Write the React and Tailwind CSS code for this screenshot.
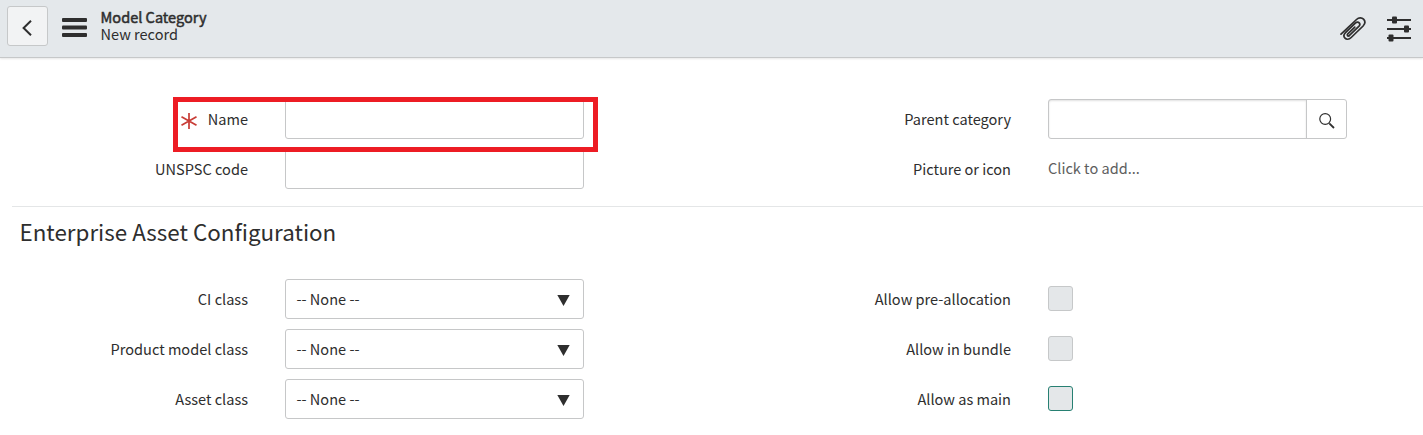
import React from "react";

function Row({ label, required, children }) {
  return (
    <div className="flex h-10">
      <div className="mr-[37px] flex w-[236px] items-center justify-end gap-[11px] whitespace-nowrap pb-px">
        {required && (
          <svg className="mt-[4px] h-4 w-4" viewBox="0 0 16 16" fill="none" stroke="#c83c36" strokeWidth="1.7">
            <path d="M8 0v16M0.5 3.7l15 8.6M0.5 12.3l15-8.6" />
          </svg>
        )}
        <span>{label}</span>
      </div>
      <div className="w-[299px]">{children}</div>
    </div>
  );
}

function TextField() {
  return <div className="h-10 rounded-[3px] border border-[#c6c7c8] bg-white" />;
}

function SelectField() {
  return (
    <div className="flex h-10 items-center justify-between rounded-[3px] border border-[#c6c7c8] bg-white pl-[10.5px] pr-[13px]">
      <span className="pb-px">-- None --</span>
      <svg className="mt-[2px] h-[11px] w-[13px]" viewBox="0 0 13 11" fill="#2e2e2e">
        <path d="M0.3 0h12.4L6.5 11z" />
      </svg>
    </div>
  );
}

function CheckField({ active }) {
  return (
    <div
      className={
        active
          ? "mt-[7px] h-[25px] w-[25px] rounded-[3px] border border-[#278072] bg-[#e4e7e9]"
          : "mt-[7px] h-[25px] w-[25px] rounded-[3px] border border-[#c6c8c9] bg-[#e4e7e9]"
      }
    />
  );
}

function Columns({ left, right }) {
  return (
    <div className="flex gap-[191px] pl-3">
      <div className="flex flex-col gap-[10px]">{left}</div>
      <div className="flex flex-col gap-[10px]">{right}</div>
    </div>
  );
}

export default function App() {
  return (
    <div className="h-[435px] w-[1423px] overflow-hidden bg-white font-['Noto_Sans_CJK_SC','Noto_Sans',sans-serif] text-[14.55px] leading-5 text-[#2e2e2e]">
      <header className="flex h-[58px] border-b border-[#c6c8c9] bg-[#e4e8eb] pl-[7px] shadow-[0_1px_2px_rgba(0,0,0,0.1)]">
        <div className="mt-[6px] flex h-10 w-[41px] items-center justify-center rounded-[3px] border border-[#c6c8c9] bg-[#f2f3f4]">
          <svg className="mr-[1px] mt-[3px] h-4 w-[10px]" viewBox="0 0 10 16" fill="none" stroke="#2e2e2e" strokeWidth="2">
            <path d="M9 0.8L1.6 8L9 15.2" />
          </svg>
        </div>
        <svg className="ml-[14px] mt-[18px] h-[19px] w-[25px]" viewBox="0 0 25 19" fill="#2e2e2e">
          <rect width="25" height="4" rx="1" />
          <rect y="7.5" width="25" height="4" rx="1" />
          <rect y="15" width="25" height="4" rx="1" />
        </svg>
        <div className="ml-[13.5px] mt-[8px] whitespace-nowrap leading-[17px]">
          <div className="[-webkit-text-stroke:0.5px_#2e2e2e]">Model Category</div>
          <div>New record</div>
        </div>
        <svg className="ml-auto mr-[21px] mt-[17px] h-6 w-[26px]" viewBox="0 0 26 24" fill="none" stroke="#2e2e2e" strokeWidth="1.7" strokeLinecap="round" strokeLinejoin="round">
          <path d="M1 17.2L16.5 2.5C18.8 0.3 21.8 0.4 23.5 2.2C25.3 4.1 25.2 6.8 23.1 9L11.2 20.5C8.9 22.8 6.3 22.6 5 21.2C3.5 19.6 3.6 17.5 5.5 15.6L15.3 6.2C16.8 4.8 18.4 5 19.2 5.9C20.1 6.9 19.9 8.3 18.8 9.4L9.2 18.6" />
          <path d="M9.2 18.6C7.9 19.7 6.5 18.2 7.8 16.9L14.8 10.1" />
        </svg>
        <svg className="mr-3 mt-4 h-[26px] w-6" viewBox="0 0 24 26" fill="#2e2e2e">
          <rect y="3" width="24" height="2" />
          <rect x="5" y="0.5" width="5" height="7" rx="1" />
          <rect y="12" width="24" height="2" />
          <rect x="17" y="9.5" width="5" height="7" rx="1" />
          <rect y="21" width="24" height="2" />
          <rect x="1.5" y="18.5" width="5" height="7" rx="1" />
        </svg>
      </header>

      <main className="relative">
        <div className="pt-[41px]">
          <Columns
            left={
              <>
                <Row label="Name" required><TextField /></Row>
                <Row label="UNSPSC code"><TextField /></Row>
              </>
            }
            right={
              <>
                <Row label="Parent category">
                  <div className="flex h-10 rounded-[3px] border border-[#c6c7c8]">
                    <div className="flex-1 rounded-l-[2px] shadow-[inset_0_1px_2px_rgba(0,0,0,0.12)]" />
                    <div className="flex w-10 items-center justify-center border-l border-[#c6c7c8]">
                      <svg className="ml-[1px] mt-[3px] h-4 w-4" viewBox="0 0 16 16" fill="none" stroke="#2e2e2e">
                        <circle cx="6.2" cy="6" r="5.4" strokeWidth="1.2" />
                        <path d="M10.3 10.3L15 15" strokeWidth="1.8" />
                      </svg>
                    </div>
                  </div>
                </Row>
                <Row label="Picture or icon">
                  <div className="flex h-full items-center pb-[2px] text-[#5e5e5e]">Click to add...</div>
                </Row>
              </>
            }
          />
        </div>
        <div className="absolute left-[173px] top-[39px] h-[55px] w-[425px] border-[5px] border-[#ed1c24]" />

        <section className="ml-3 mt-[17px] border-t border-[#e4e6e7]">
          <h2 className="h-[72px] whitespace-nowrap pl-[7.5px] pt-[9px] text-[22.4px] leading-[30px]">
            Enterprise Asset Configuration
          </h2>
        </section>
        <Columns
          left={
            <>
              <Row label="CI class"><SelectField /></Row>
              <Row label="Product model class"><SelectField /></Row>
              <Row label="Asset class"><SelectField /></Row>
            </>
          }
          right={
            <>
              <Row label="Allow pre-allocation"><CheckField /></Row>
              <Row label="Allow in bundle"><CheckField /></Row>
              <Row label="Allow as main"><CheckField active /></Row>
            </>
          }
        />
      </main>
    </div>
  );
}
